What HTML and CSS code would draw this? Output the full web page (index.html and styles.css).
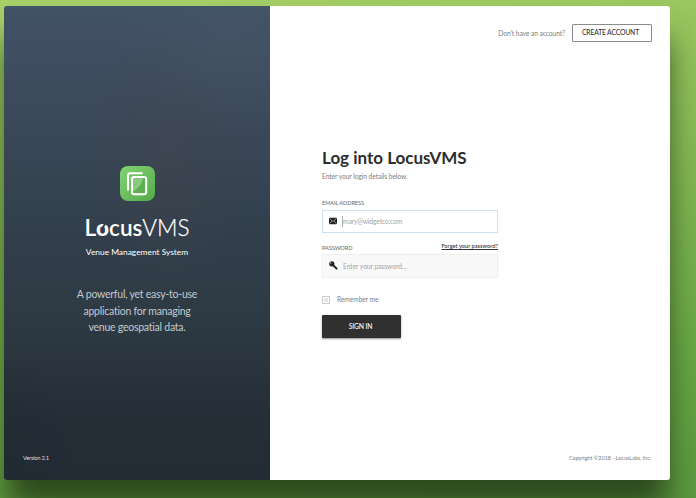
FILE: index.html
```html
<!DOCTYPE html>
<html lang="en">
<head>
<meta charset="utf-8">
<title>LocusVMS</title>
<link rel="stylesheet" href="styles.css">
</head>
<body>
<main class="card">
  <section class="brand">
    <svg class="brand-icon" viewBox="0 0 35 35" width="35" height="35">
      <defs>
        <linearGradient id="tile" x1="0" y1="0" x2="1" y2="1"><stop offset="0" stop-color="#83d573"/><stop offset="1" stop-color="#55a94b"/></linearGradient>
      </defs>
      <rect width="35" height="35" rx="8" fill="url(#tile)"/>
      <path d="M8 24.500V9.500Q8 7.200 10.300 7.200H22.700" fill="none" stroke="#fff" stroke-width="2"/>
      <rect x="12" y="11" width="14.200" height="17.300" rx="2.200" fill="#5fae54"/>
      <path d="M12 11H23.500C22.500 18 18 23 12 25.500Z" fill="#88c97d"/>
      <rect x="12" y="11" width="14.200" height="17.300" rx="2.200" fill="none" stroke="#fff" stroke-width="2"/>
    </svg>
    <h1 class="logo"><b>L<span class="logo-o">o</span>cus</b><span class="logo-vms">VMS</span></h1>
    <p class="tagline">Venue Management System</p>
    <p class="pitch">A powerful, yet easy-to-use<br>application for managing<br>venue geospatial data.</p>
    <p class="version">Version 2.1</p>
  </section>
  <section class="content">
    <header class="top">
      <span class="question">Don’t have an account?</span>
      <a class="create">CREATE ACCOUNT</a>
    </header>
    <form class="login">
      <h2 class="title">Log into LocusVMS</h2>
      <p class="hint">Enter your login details below.</p>
      <div class="label-row"><span class="label">EMAIL ADDRESS</span></div>
      <div class="field field-active">
        <svg class="field-icon" viewBox="0 0 8 8" width="8" height="8"><rect y=".8" width="8" height="6.500" rx="1" fill="#222"/><path d="M.8 1.800L4 4.500L7.200 1.800M.8 6.500L2.900 4.100M7.200 6.500L5.100 4.100" fill="none" stroke="#ddd" stroke-width=".6"/></svg>
        <span class="caret"></span><span class="mail">mary@widgetco.com</span>
      </div>
      <div class="label-row second"><span class="label pass-label">PASSWORD</span><a class="forgot">Forget your password?</a></div>
      <div class="field field-muted">
        <svg class="field-icon key" viewBox="0 0 9 9" width="9" height="9"><path d="M3.600 3.600L8.100 8.100" stroke="#222" stroke-width="2"/><circle cx="2.800" cy="2.800" r="2.600" fill="#222"/><circle cx="1.800" cy="1.900" r=".65" fill="#f9f9f9"/></svg>
        <span class="pass">Enter your password...</span>
      </div>
      <div class="remember"><span class="check"></span><span class="remember-text">Remember me</span></div>
      <a class="signin">SIGN IN</a>
    </form>
    <footer class="copyright">Copyright ©2018 - LocusLabs, Inc.</footer>
  </section>
</main>
</body>
</html>
```
FILE: styles.css
```css
* { box-sizing: border-box; }
body {
  margin: 0;
  width: 696px;
  height: 498px;
  padding: 6px 0 0 4px;
  overflow: hidden;
  font-family: Lato, "Open Sans", sans-serif;
  background: linear-gradient(174deg, #a8d06a 0%, #9ac65f 14%, #68a645 75%, #5b983f 100%);
}
h1, h2, p { margin: 0; font-weight: 400; }
.card {
  display: flex;
  width: 666px;
  height: 474px;
  border-radius: 3px;
  box-shadow: 0 30px 28px -3px rgba(38, 62, 24, .88);
}
.brand {
  display: flex;
  flex-direction: column;
  align-items: center;
  width: 266px;
  padding: 160px 0 0;
  border-radius: 3px 0 0 3px;
  color: #fff;
  text-align: center;
  white-space: nowrap;
  background:
    radial-gradient(ellipse 85px 130px at 62% 31%, rgba(70, 69, 73, .3), transparent),
    radial-gradient(ellipse 110px 90px at 85% 8%, rgba(73, 91, 103, .35), transparent),
    radial-gradient(ellipse 70px 90px at 0% 92%, rgba(27, 42, 50, .5), transparent),
    linear-gradient(180deg, #425267 0%, #3b4858 25%, #33404d 45%, #2d3942 68%, #252d37 88%, #232b34 100%);
}
.brand-icon { display: block; flex: none; }
.logo {
  display: flex;
  height: 30px;
  margin-top: 12px;
  font-size: 22.5px;
  line-height: 30px;
}
.logo b { font-weight: 600; }
.logo-o { position: relative; font-weight: 900; }
.logo-o::after {
  content: "";
  position: absolute;
  left: 7px;
  top: 8px;
  width: 2px;
  height: 7px;
  background: #34414e;
  transform: rotate(32deg);
}
.logo-vms { font-weight: 300; -webkit-text-stroke: .25px #fff; }
.tagline { height: 12px; margin-top: 3px; font-size: 8.4px; line-height: 12px; }
.pitch { margin-top: 28px; font-size: 10.500px; letter-spacing: -.24px; line-height: 16.7px; color: #c3c9cd; }
.version { align-self: flex-start; margin: auto 0 17px 19px; font-size: 5.8px; letter-spacing: -.25px; line-height: 10px; color: #d9dde0; }
.content {
  display: flex;
  flex-direction: column;
  width: 400px;
  padding: 18px 19px 17px 52px;
  border-radius: 0 3px 3px 0;
  background: #fff;
  white-space: nowrap;
}
.top { display: flex; justify-content: flex-end; align-items: center; height: 18px; margin-right: -1px; }
.question { margin-right: 7px; font-size: 6.7px; letter-spacing: -.08px; color: #808080; }
.create {
  width: 80px;
  height: 18px;
  padding-right: 3px;
  border: 1px solid #8b8b8b;
  border-radius: 1px;
  font-size: 6.8px;
  letter-spacing: -.17px;
  font-weight: 500;
  line-height: 15px;
  text-align: center;
  color: #333;
}
.login { display: flex; flex-direction: column; width: 176px; margin-top: 104px; }
.title { height: 24px; font-size: 17px; font-weight: 700; line-height: 24px; color: #2d2d2d; }
.hint { height: 10px; margin-top: 1px; font-size: 6.7px; letter-spacing: -.08px; line-height: 10px; color: #808080; }
.label-row { display: flex; justify-content: space-between; height: 8px; margin-top: 18px; font-size: 5.6px; font-weight: 500; line-height: 8px; color: #707070; }
.label { letter-spacing: -.08px; }
.field { display: flex; align-items: center; height: 24px; margin-top: 3px; padding: 0 0 1px 6px; border: 1px solid #cfe0ef; font-size: 6.7px; color: #a4a4a4; }
.field-active { height: 23px; }
.field-icon { flex: none; width: 8px; }
.caret { width: 1px; height: 11px; margin-left: 5px; background: #aaa; }
.mail { letter-spacing: -.12px; }
.label-row.second { margin-top: 10px; }
.pass-label { padding-top: 1px; }
.forgot { margin-top: -1px; font-size: 5.7px; line-height: 7px; text-decoration: underline; color: #333; }
.field-muted { border-color: #efefef; background: #f9f9f9; }
.pass { margin-left: 5px; letter-spacing: -.06px; }
.key { width: 9px; }
.remember { display: flex; align-items: center; height: 10px; margin-top: 16px; font-size: 6.7px; letter-spacing: -.08px; color: #808080; }
.check { width: 8px; height: 8px; margin: 1px 7px 0 0; border: 1px solid #ccc; background: #e5e5e5; box-shadow: inset 0 0 0 1px #fff; }
.signin { width: 79px; height: 23px; margin-top: 11px; padding-right: 2px; border-radius: 1px; background: #303030; box-shadow: 0 1px 2px rgba(0, 0, 0, .45); font-size: 6.8px; letter-spacing: -.17px; font-weight: 500; line-height: 22px; text-align: center; color: #fff; }
.copyright { margin-top: auto; text-align: right; font-size: 5.6px; letter-spacing: -.08px; line-height: 10px; color: #808080; }
```
